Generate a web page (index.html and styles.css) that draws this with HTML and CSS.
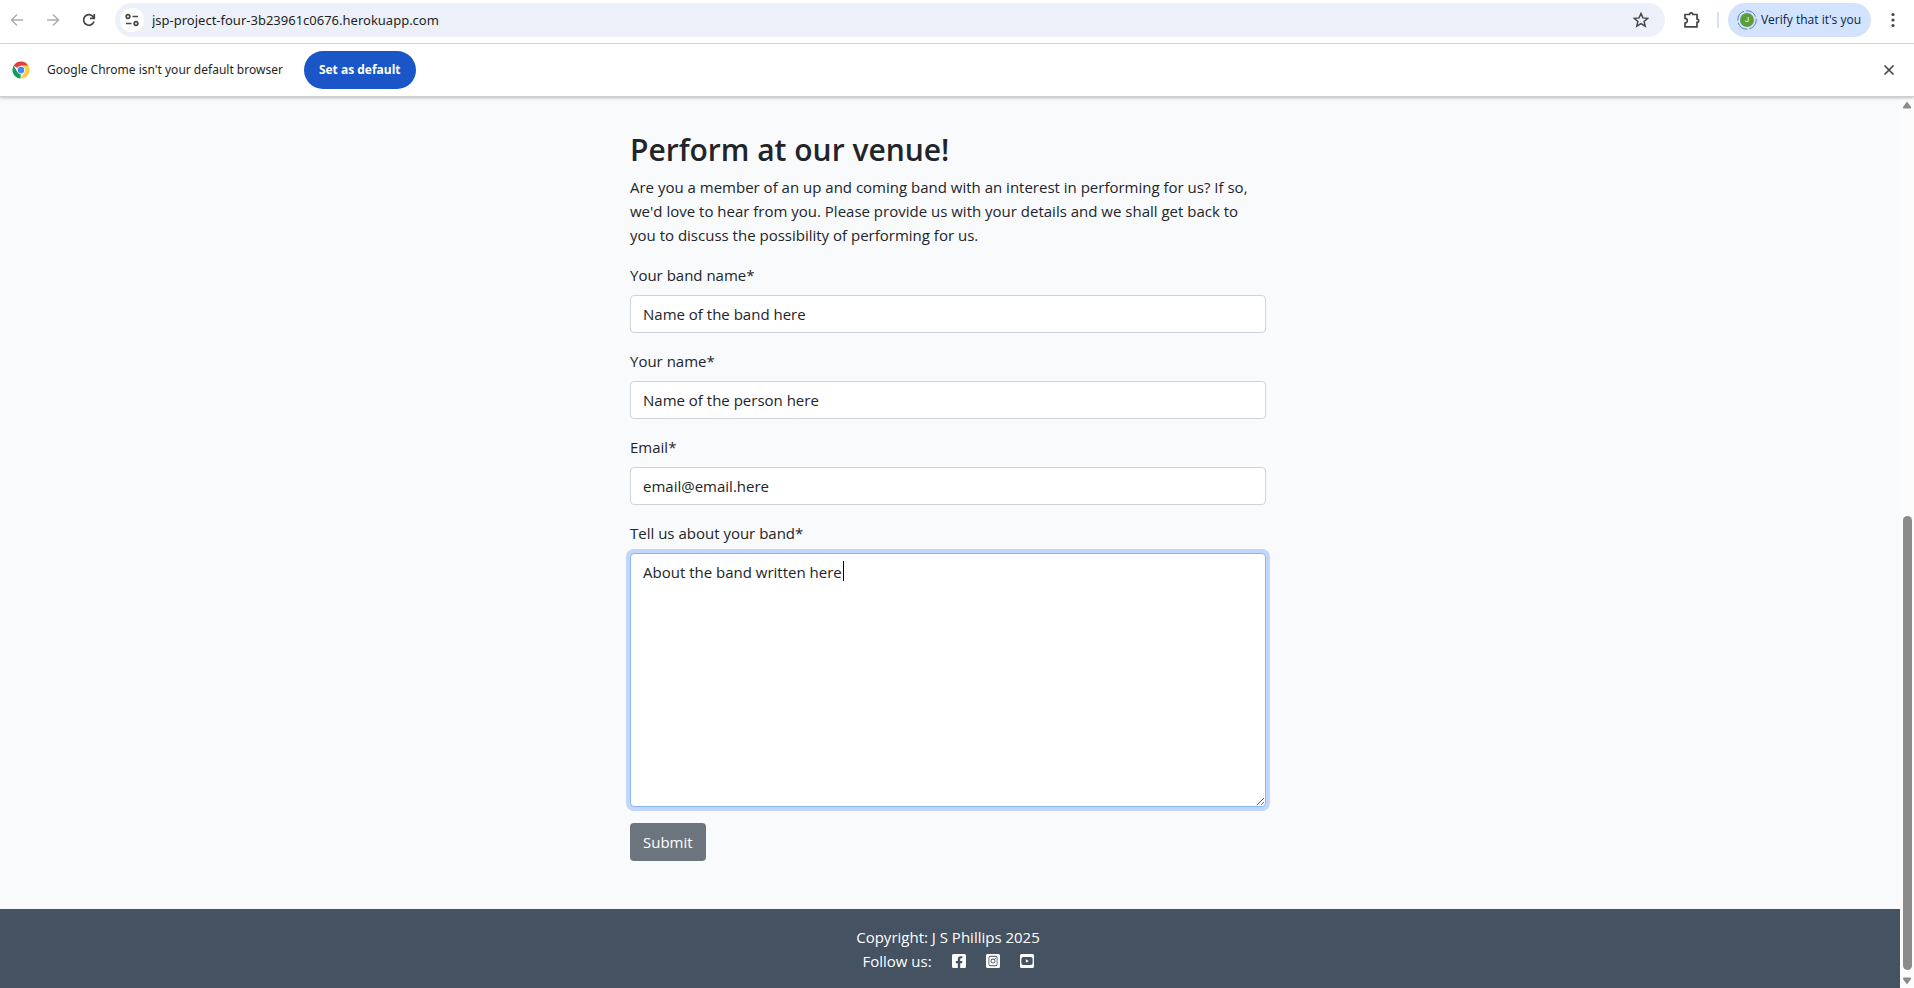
FILE: index.html
```html
<!DOCTYPE html>
<html lang="en">
<head>
<meta charset="utf-8">
<meta name="viewport" content="width=device-width, initial-scale=1">
<title>Perform at our venue</title>
<link rel="stylesheet" href="styles.css">
</head>
<body>
<header class="toolbar">
  <button class="icon-btn muted" aria-label="Back"><svg width="16" height="16" viewBox="0 0 16 16"><path d="M14 8H3M8 2.500 2.500 8 8 13.500"/></svg></button>
  <button class="icon-btn muted" aria-label="Forward"><svg width="16" height="16" viewBox="0 0 16 16"><path d="M2 8h11M8 2.500 13.500 8 8 13.500"/></svg></button>
  <button class="icon-btn" aria-label="Reload"><svg width="16" height="16" viewBox="0 0 16 16"><path class="thick" d="M13 9.500A5.300 5.300 0 1 1 12.200 4.800L13.300 6.200M13.300 2v4.300H9"/></svg></button>
  <div class="omnibox">
    <button class="site-info" aria-label="View site information"><svg width="16" height="16" viewBox="0 0 16 16"><path class="thick" d="M8.500 4.500H14M2 11.500h5.500"/><circle class="thick" cx="4" cy="4.500" r="1.800"/><circle class="thick" cx="12" cy="11.500" r="1.800"/></svg></button>
    <input class="url" type="text" aria-label="Address" value="jsp-project-four-3b23961c0676.herokuapp.com">
    <button class="icon-btn" aria-label="Bookmark this tab"><svg width="16" height="16" viewBox="0 0 16 16"><path d="M8 1.500 9.900 5.900 14.700 6.300 11.100 9.500 12.200 14.200 8 11.700 3.800 14.200 4.900 9.500 1.300 6.300 6.100 5.900Z"/></svg></button>
  </div>
  <button class="icon-btn extensions" aria-label="Extensions"><svg width="18" height="18" viewBox="0 0 18 18"><path class="thick" d="M2 3.500H6.500a1.700 1.700 0 0 1 3.400 0H14V8a1.700 1.700 0 0 1 0 3.400V15.800H2V12a2.300 2.300 0 0 0 0-4.600Z"/></svg></button>
  <span class="divider"></span>
  <button class="profile"><span class="avatar"><svg width="20" height="20" viewBox="0 0 20 20"><circle class="ring" cx="10" cy="10" r="9.200"/><circle class="disc" cx="10" cy="10" r="7"/></svg><span class="initial">J</span></span>Verify that it's you</button>
  <button class="icon-btn menu" aria-label="Menu"><svg width="16" height="16" viewBox="0 0 16 16"><g class="solid"><circle cx="8" cy="2.500" r="1.600"/><circle cx="8" cy="8" r="1.600"/><circle cx="8" cy="13.500" r="1.600"/></g></svg></button>
</header>
<section class="infobar">
  <svg class="chrome-logo" width="18" height="18" viewBox="0 0 18 18">
    <path fill="#db4437" d="M9 9 1.600 4.700A8.500 8.500 0 0 1 16.400 4.800H9Z"/>
    <path fill="#0f9d58" d="M9 9 8.500 17.500A8.500 8.500 0 0 1 1.600 4.700L5.400 11.100Z"/>
    <path fill="#ffcd40" d="M9 4.800H16.400A8.500 8.500 0 0 1 8.500 17.500L12.600 11Z"/>
    <circle cx="9" cy="9" r="4.200" fill="#f1f1f1"/><circle cx="9" cy="9" r="3.200" fill="#4285f4"/>
  </svg>
  <span class="info-text">Google Chrome isn't your default browser</span>
  <button class="default-btn">Set as default</button>
  <button class="icon-btn close" aria-label="Close"><svg width="12" height="12" viewBox="0 0 12 12"><path class="thick" d="m1.500 1.500 9 9m0-9-9 9"/></svg></button>
</section>
<div class="viewport">
  <div class="page">
    <main class="content">
      <form class="booking">
        <h2 class="title">Perform at our venue!</h2>
        <p class="intro">Are you a member of an up and coming band with an interest in performing for us? If so, we'd love to hear from you. Please provide us with your details and we shall get back to you to discuss the possibility of performing for us.</p>
        <div class="field"><label for="band">Your band name*</label><input class="control" id="band" type="text" value="Name of the band here"></div>
        <div class="field"><label for="person">Your name*</label><input class="control" id="person" type="text" value="Name of the person here"></div>
        <div class="field"><label for="email">Email*</label><input class="control" id="email" type="email" value="email@email.here"></div>
        <div class="field"><label for="about">Tell us about your band*</label><div class="area"><textarea class="control focused" id="about" rows="10">About the band written here</textarea><span class="caret"></span></div></div>
        <button class="submit" type="button">Submit</button>
      </form>
    </main>
    <footer class="footer">
      <div>Copyright: J S Phillips 2025</div>
      <div class="social"><span>Follow us:</span>
        <a href="#" aria-label="Facebook"><svg width="14" height="16" viewBox="0 0 448 512"><path d="M400 32H48A48 48 0 0 0 0 80v352a48 48 0 0 0 48 48h137.250V327.690h-63V256h63v-54.640c0-62.150 37-96.480 93.670-96.480 27.140 0 55.520 4.840 55.520 4.840v61h-31.270c-30.810 0-40.420 19.120-40.420 38.730V256h68.780l-11 71.690h-57.780V480H400a48 48 0 0 0 48-48V80a48 48 0 0 0-48-48z"/></svg></a>
        <a href="#" aria-label="Instagram"><svg width="14" height="16" viewBox="0 0 448 512"><path fill-rule="evenodd" d="M48 32H400a48 48 0 0 1 48 48V432a48 48 0 0 1-48 48H48a48 48 0 0 1-48-48V80a48 48 0 0 1 48-48ZM150 91a70 70 0 0 0-70 70V351a70 70 0 0 0 70 70H298a70 70 0 0 0 70-70V161a70 70 0 0 0-70-70ZM150 118H298a44 44 0 0 1 44 44V350a44 44 0 0 1-44 44H150a44 44 0 0 1-44-44V162a44 44 0 0 1 44-44ZM224 178a78 78 0 1 0 0 156 78 78 0 1 0 0-156ZM224 206a50 50 0 1 1 0 100 50 50 0 1 1 0-100ZM304 156a18 18 0 1 0 0 36 18 18 0 1 0 0-36Z"/></svg></a>
        <a href="#" aria-label="YouTube"><svg width="14" height="16" viewBox="0 0 448 512"><path d="M186.800 202.100l95.200 54.100-95.200 54.100V202.100zM448 80v352c0 26.500-21.500 48-48 48H48c-26.500 0-48-21.500-48-48V80c0-26.500 21.500-48 48-48h352c26.500 0 48 21.500 48 48zm-42 176.300s0-59.600-7.600-88.200c-4.200-15.800-16.500-28.200-32.200-32.400C337.900 128 224 128 224 128s-113.900 0-142.200 7.700c-15.700 4.200-28 16.600-32.200 32.400-7.600 28.500-7.600 88.200-7.600 88.200s0 59.600 7.600 88.200c4.200 15.800 16.500 27.700 32.200 31.900C110.100 384 224 384 224 384s113.900 0 142.200-7.700c15.700-4.200 28-16.100 32.200-31.900 7.600-28.500 7.600-88.100 7.600-88.100z"/></svg></a>
      </div>
    </footer>
  </div>
  <div class="scrollbar" aria-hidden="true">
    <svg width="10" height="8" viewBox="0 0 10 8"><path d="M5 .5 9 6q.6 1.500-1 1.500H2Q.4 7.500 1 6Z"/></svg>
    <div class="track"><div class="thumb"></div></div>
    <svg width="10" height="8" viewBox="0 0 10 8"><path d="M5 7.500 1 2Q.4.500 2 .5h6q1.600 0 1 1.500Z"/></svg>
  </div>
</div>
</body>
</html>
```

FILE: styles.css
```css
* { box-sizing: border-box; }
body {
  margin: 0;
  height: 100vh;
  display: flex;
  flex-direction: column;
  overflow: hidden;
  background: #fff;
  color: #212529;
  font: 15px/24px "Open Sans", "Noto Sans", sans-serif;
}
button, input, textarea { font: inherit; color: inherit; }
button { border: 0; background: none; padding: 0; cursor: pointer; }

.toolbar {
  display: flex;
  align-items: center;
  height: 44px;
  padding: 0 11px 4px 7px;
  border-bottom: 1px solid #dcdee0;
  font-size: 12px;
}
.icon-btn {
  display: grid;
  place-items: center;
  width: 20px;
  height: 20px;
  margin-right: 16px;
}
.icon-btn svg, .site-info svg { fill: none; stroke: #454746; stroke-width: 1.500; }
.icon-btn .thick, .site-info .thick { stroke-width: 1.700; }
.icon-btn .solid { fill: #454746; stroke: none; }
.icon-btn.muted svg { stroke: #adadad; }
.omnibox {
  flex: 1;
  display: flex;
  align-items: center;
  height: 34px;
  padding-left: 5px;
  margin-right: 17px;
  border-radius: 17px;
  background: #ecf1f9;
}
.omnibox .icon-btn { margin-right: 14px; }
.site-info {
  display: grid;
  place-items: center;
  width: 24px;
  height: 24px;
  border-radius: 50%;
  background: #fff;
}
.url {
  flex: 1;
  border: 0;
  padding: 0 8px;
  background: none;
  color: #1f1f1f;
  font-family: "Noto Sans", sans-serif;
  font-size: 13px;
}
.toolbar .extensions { margin-right: 15px; }
.divider { width: 2px; height: 16px; margin-right: 9px; background: #d3e3fd; }
.profile {
  display: flex;
  align-items: center;
  gap: 4px;
  height: 34px;
  padding: 0 10px 0 9px;
  margin-right: 12px;
  border-radius: 17px;
  background: #d3e3fd;
  color: #041e49;
}
.avatar { display: grid; place-items: center; }
.avatar > * { grid-area: 1 / 1; }
.ring { fill: none; stroke: #5d7fc0; stroke-width: 1; stroke-dasharray: 12 2; }
.disc { fill: #5b9f3d; }
.initial { color: #fff; font-family: Roboto, sans-serif; font-size: 8px; line-height: 8px; }
.toolbar .menu { margin-right: 0; }

.infobar {
  position: relative;
  display: flex;
  align-items: center;
  height: 53px;
  padding: 0 15px 0 12px;
  border-bottom: 1px solid #cdcfd1;
  box-shadow: 0 1px 3px rgba(0, 0, 0, .25);
  font-size: 12px;
  color: #1f1f1f;
}
.info-text { margin: 0 21px 0 17px; font-family: "Noto Sans", sans-serif; }
.default-btn {
  height: 38px;
  padding: 0 15px;
  border-radius: 19px;
  background: #1a56c8;
  color: #fff;
  font-weight: 700;
}
.infobar .close { margin: 0 0 0 auto; }

.viewport { flex: 1; display: flex; min-height: 0; }
.page { flex: 1; display: flex; flex-direction: column; background: #f9fafc; }
.content { flex: 1; padding: 34px 4px 48px 0; }
.booking { width: 636px; max-width: 100%; margin: 0 auto; }
.title { margin: 0 0 6px; font-size: 30px; line-height: 38px; font-weight: 600; }
.intro { margin: 0 0 16px; }
.field { margin-bottom: 16px; }
.field label { display: block; margin-bottom: 8px; }
.control {
  display: block;
  width: 100%;
  padding: 6px 12px;
  border: 1px solid #ced4da;
  border-radius: 4px;
  background: #fff;
  outline: 0;
}
.control.focused { border-color: #86b7fe; box-shadow: 0 0 0 4px #c2d5fb; }
.area { position: relative; }
.caret { position: absolute; left: 213px; top: 8px; width: 1px; height: 20px; background: #000; }
.submit {
  display: block;
  height: 38px;
  padding: 0 13px;
  border-radius: 4px;
  background: #6c757d;
  color: #fff;
}
.footer { padding: 16px 4px 15px 0; background: #445261; color: #fff; text-align: center; }
.social { display: flex; justify-content: center; align-items: center; gap: 20px; }
.social a { display: flex; fill: #fff; }

.scrollbar {
  display: flex;
  flex-direction: column;
  align-items: center;
  width: 14px;
  padding: 4px 0 3px;
  background: #fcfcfc;
  fill: #8b8b8b;
}
.track { flex: 1; display: flex; align-items: flex-end; padding: 4px 0 7px; }
.thumb { width: 9px; height: 53%; border-radius: 5px; background: #8b8b8b; }
```
